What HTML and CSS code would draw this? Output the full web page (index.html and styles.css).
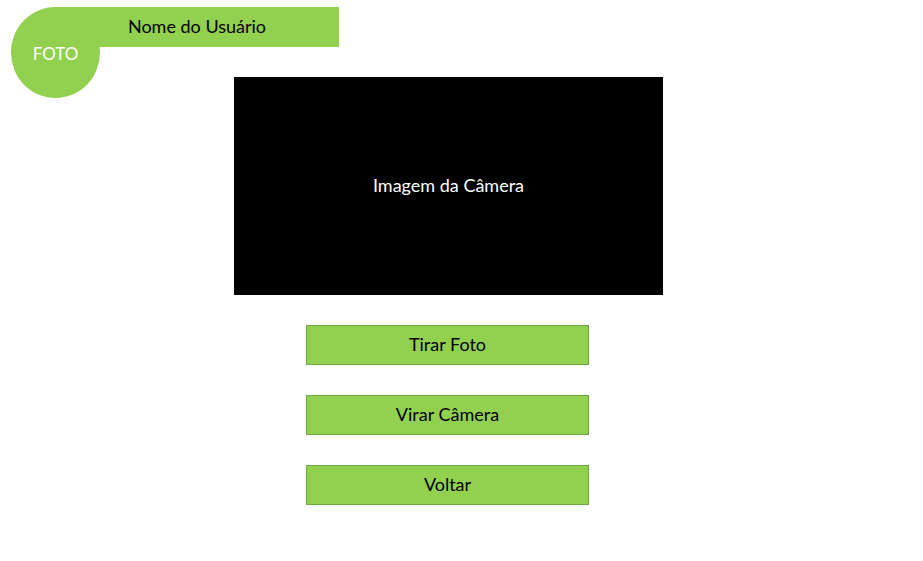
FILE: index.html
```html
<!DOCTYPE html>
<html lang="pt-BR">
<head>
<meta charset="utf-8">
<title>Câmera</title>
<link rel="stylesheet" href="styles.css">
</head>
<body>
<header class="header">
  <div class="avatar">FOTO</div>
  <div class="user-bar">Nome do Usuário</div>
</header>
<main class="main">
  <div class="camera">Imagem da Câmera</div>
  <div class="actions">
    <button class="btn">Tirar Foto</button>
    <button class="btn">Virar Câmera</button>
    <button class="btn">Voltar</button>
  </div>
</main>
</body>
</html>
```
FILE: styles.css
```css
* { box-sizing: border-box; }
html, body { margin: 0; padding: 0; background: #fff; }
body {
  font-family: "Lato", "Open Sans", sans-serif;
  font-size: 18px;
  color: #000;
  width: 923px;
  height: 561px;
  overflow: hidden;
}
.header {
  display: flex;
  align-items: flex-start;
  padding: 7px 0 0 11px;
}
.avatar {
  position: relative;
  z-index: 1;
  width: 89px;
  height: 91px;
  margin-bottom: -51px;
  border-radius: 50%;
  background: #92d050;
  color: #fff;
  font-size: 17px;
  display: flex;
  align-items: center;
  justify-content: center;
  padding-top: 1px;
}
.user-bar {
  width: 284px;
  height: 40px;
  margin-left: -45px;
  background: #92d050;
  display: flex;
  align-items: center;
  justify-content: center;
  padding-bottom: 3px;
}
.main {
  display: flex;
  flex-direction: column;
}
.camera {
  margin: 30px 0 0 234px;
  width: 429px;
  height: 218px;
  background: #000;
  color: #fff;
  display: flex;
  align-items: center;
  justify-content: center;
  padding-bottom: 2px;
}
.actions {
  margin: 30px 0 0 306px;
  display: flex;
  flex-direction: column;
  gap: 30px;
  width: 283px;
}
.btn {
  height: 40px;
  width: 283px;
  background: #92d050;
  border: 1px solid #6ea845;
  font: inherit;
  color: #000;
  padding: 0 0 3px;
  cursor: pointer;
}
```
